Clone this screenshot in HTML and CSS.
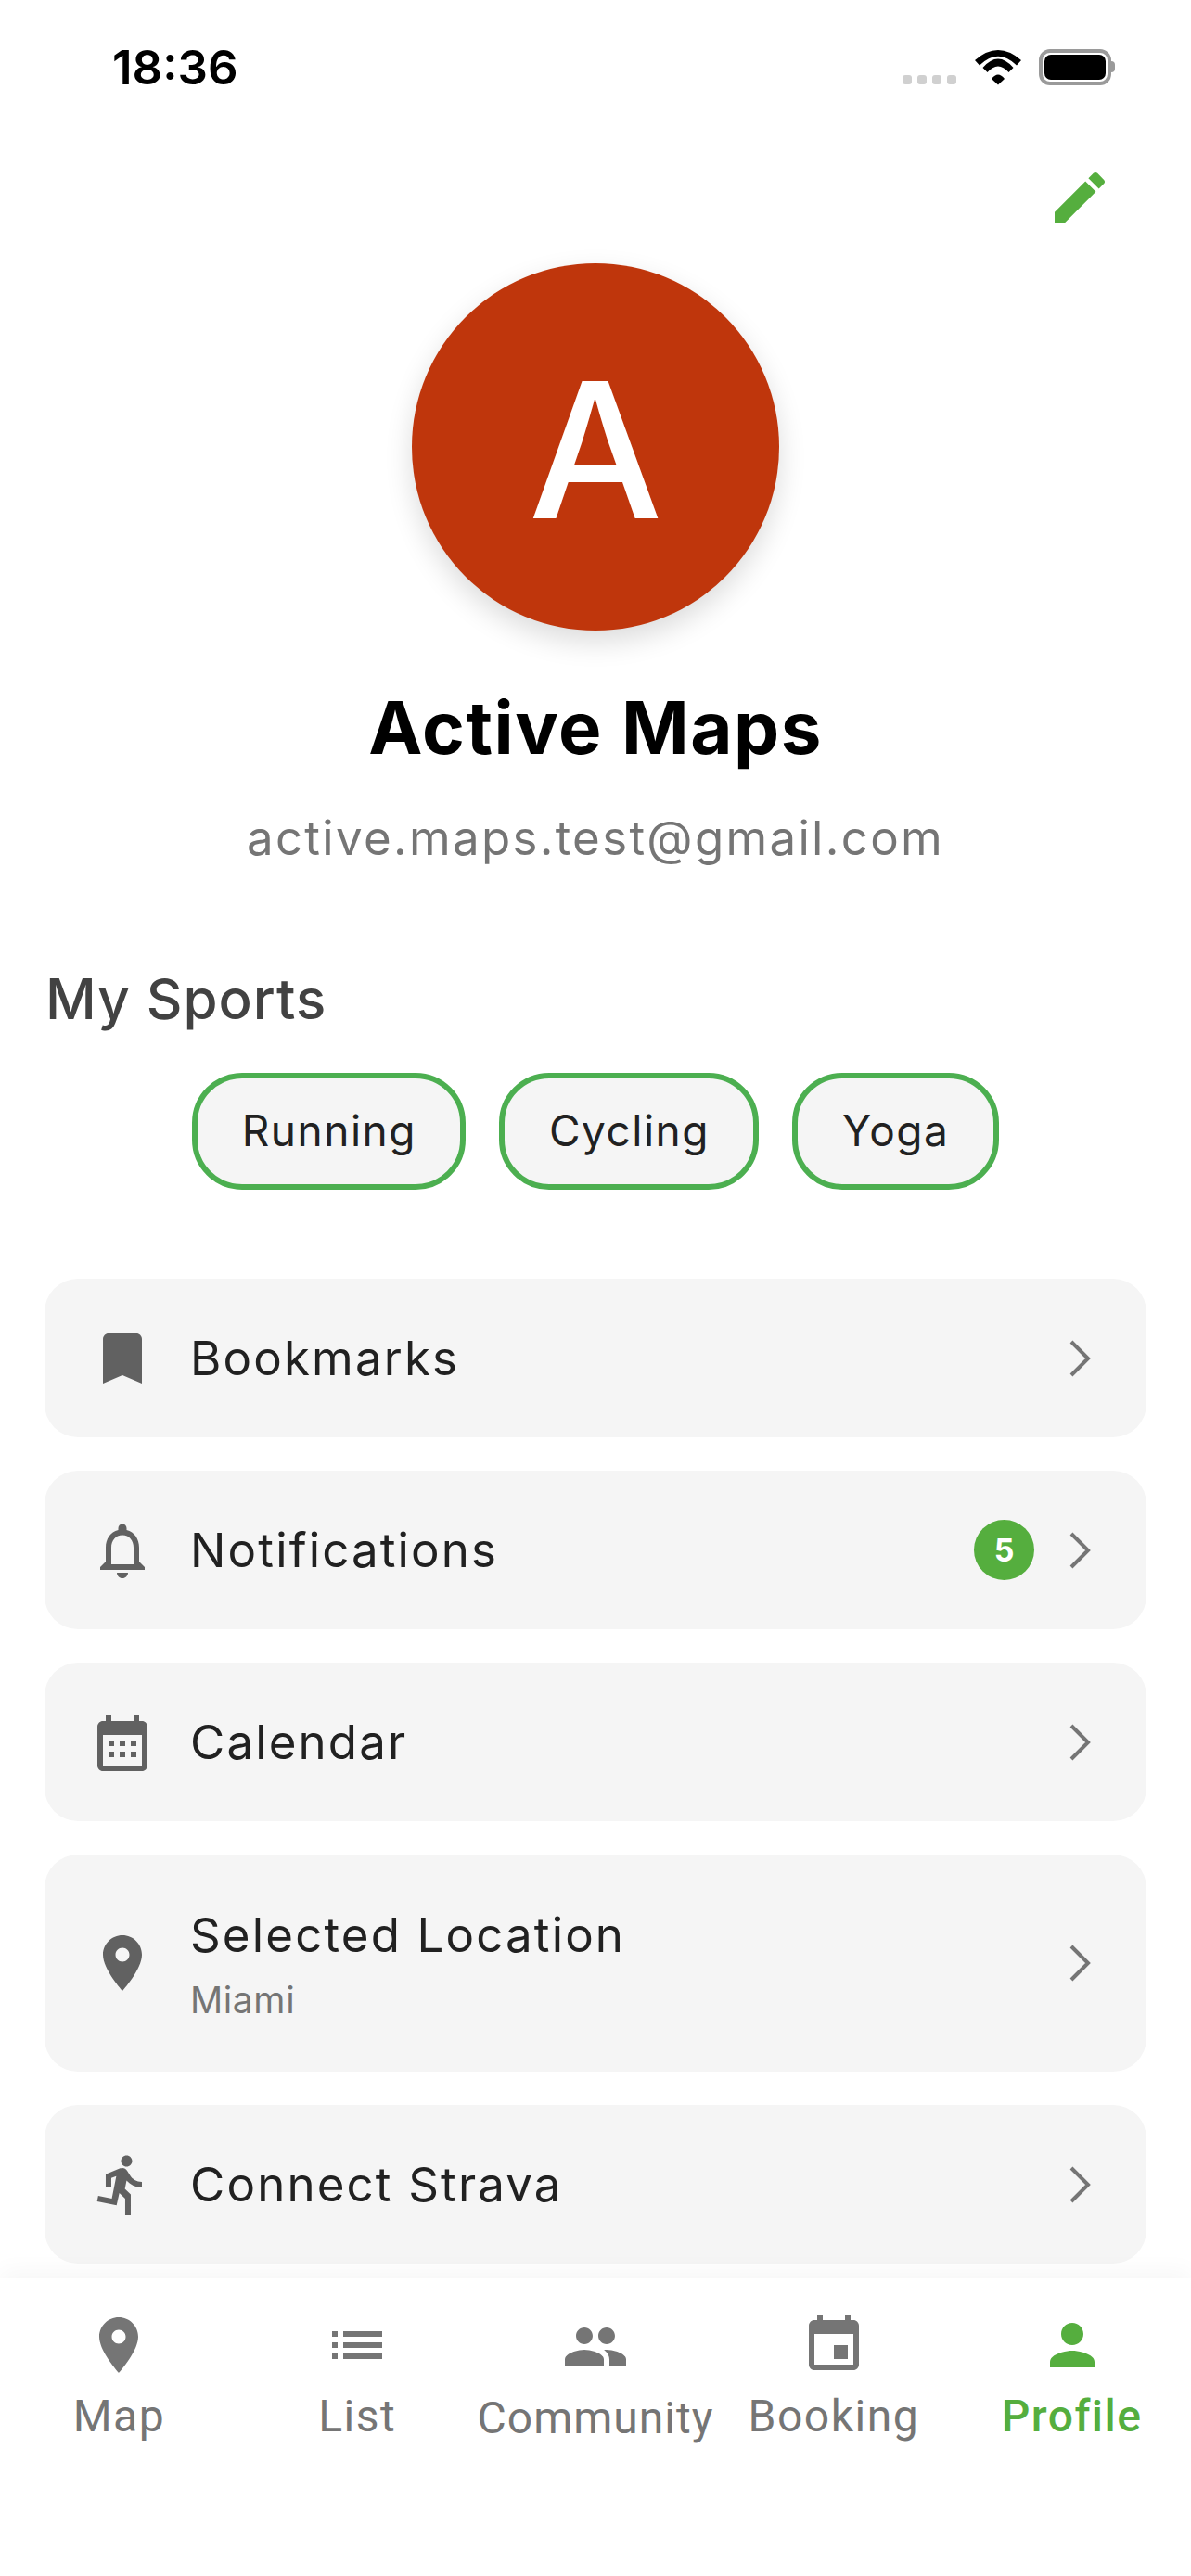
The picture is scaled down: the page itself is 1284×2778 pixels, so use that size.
FILE: index.html
```html
<!DOCTYPE html>
<html lang="en">
<head>
<meta charset="utf-8">
<title>Profile</title>
<link rel="stylesheet" href="styles.css">
</head>
<body>
<div class="screen">
  <header class="status-bar">
    <span class="time">18:36</span>
    <div class="status-icons">
      <div class="signal"><i></i><i></i><i></i><i></i></div>
      <svg class="wifi" viewBox="0 0 50 37.5"><path d="M0 11Q25-11 50 11L45 16.5Q25-3 5 16.5Z"/><path d="M8.5 19Q25 0 41.5 19L36.5 24Q25 11 13.5 24Z"/><path d="M18 31Q25 22 32 31L25 37.5Z"/></svg>
      <div class="battery"><div class="battery-fill"></div></div>
      <div class="battery-cap"></div>
    </div>
  </header>

  <main class="content">
    <div class="edit-row">
      <svg class="icon icon-green" viewBox="0 0 24 24"><path d="M3 17.25V21h3.75L17.81 9.94l-3.75-3.75L3 17.25zM20.71 7.04c.39-.39.39-1.02 0-1.41l-2.34-2.34c-.39-.39-1.02-.39-1.41 0l-1.83 1.83 3.75 3.75 1.83-1.83z"/></svg>
    </div>
    <div class="avatar">A</div>
    <h1 class="name">Active Maps</h1>
    <p class="email">active.maps.test@gmail.com</p>
    <h2 class="section-title">My Sports</h2>
    <div class="chips">
      <span class="chip">Running</span>
      <span class="chip">Cycling</span>
      <span class="chip">Yoga</span>
    </div>
    <div class="menu">
      <div class="card">
        <svg class="icon icon-dark" viewBox="0 0 24 24"><path d="M17 3H7c-1.1 0-1.99.9-1.99 2L5 21l7-3 7 3V5c0-1.1-.9-2-2-2z"/></svg>
        <div class="card-text"><span class="card-title">Bookmarks</span></div>
        <svg class="chevron" viewBox="0 0 24 40"><path d="M3 2L21 20L3 38"/></svg>
      </div>
      <div class="card">
        <svg class="icon icon-dark" viewBox="0 0 24 24"><path d="M12 22c1.1 0 2-.9 2-2h-4c0 1.1.89 2 2 2zm6-6v-5c0-3.07-1.64-5.64-4.5-6.32V4c0-.83-.67-1.5-1.5-1.5s-1.5.67-1.5 1.5v.68C7.63 5.36 6 7.92 6 11v5l-2 2v1h16v-1l-2-2zm-2 1H8v-6c0-2.48 1.51-4.5 4-4.5s4 2.02 4 4.5v6z"/></svg>
        <div class="card-text"><span class="card-title">Notifications</span></div>
        <span class="badge">5</span>
        <svg class="chevron" viewBox="0 0 24 40"><path d="M3 2L21 20L3 38"/></svg>
      </div>
      <div class="card">
        <svg class="icon icon-dark icon-low" viewBox="0 0 24 24"><path d="M19 3h-1V1h-2v2H8V1H6v2H5c-1.11 0-1.99.9-1.99 2L3 19c0 1.1.89 2 2 2h14c1.1 0 2-.9 2-2V5c0-1.1-.9-2-2-2zm0 16H5V8h14v11zM7 10h2v2H7zm4 0h2v2h-2zm4 0h2v2h-2zM7 14h2v2H7zm4 0h2v2h-2zm4 0h2v2h-2z"/></svg>
        <div class="card-text"><span class="card-title">Calendar</span></div>
        <svg class="chevron" viewBox="0 0 24 40"><path d="M3 2L21 20L3 38"/></svg>
      </div>
      <div class="card card-tall">
        <svg class="icon icon-dark" viewBox="0 0 24 24"><path d="M12 2C8.13 2 5 5.13 5 9c0 5.25 7 13 7 13s7-7.75 7-13c0-3.87-3.13-7-7-7zm0 9.5c-1.38 0-2.5-1.12-2.5-2.5s1.12-2.5 2.5-2.5 2.5 1.12 2.5 2.5-1.12 2.5-2.5 2.5z"/></svg>
        <div class="card-text"><span class="card-title">Selected Location</span><span class="card-sub">Miami</span></div>
        <svg class="chevron" viewBox="0 0 24 40"><path d="M3 2L21 20L3 38"/></svg>
      </div>
      <div class="card">
        <svg class="icon icon-dark" viewBox="0 0 24 24"><path d="M13.49 5.48c1.1 0 2-.9 2-2s-.9-2-2-2-2 .9-2 2 .9 2 2 2zm-3.6 13.9l1-4.4 2.1 2v6h2v-7.5l-2.1-2 .6-3c1.3 1.5 3.3 2.5 5.5 2.5v-2c-1.9 0-3.5-1-4.3-2.4l-1-1.6c-.4-.6-1-1-1.7-1-.3 0-.5.1-.8.1l-5.2 2.2v4.7h2v-3.4l1.8-.7-1.6 8.1-4.9-1-.4 2 7 1.4z"/></svg>
        <div class="card-text"><span class="card-title">Connect Strava</span></div>
        <svg class="chevron" viewBox="0 0 24 40"><path d="M3 2L21 20L3 38"/></svg>
      </div>
    </div>
  </main>

  <nav class="tabbar">
    <div class="tab">
      <svg class="icon" viewBox="0 0 24 24"><path d="M12 2C8.13 2 5 5.13 5 9c0 5.25 7 13 7 13s7-7.75 7-13c0-3.87-3.13-7-7-7zm0 9.5c-1.38 0-2.5-1.12-2.5-2.5s1.12-2.5 2.5-2.5 2.5 1.12 2.5 2.5-1.12 2.5-2.5 2.5z"/></svg>
      <span class="tab-label">Map</span>
    </div>
    <div class="tab">
      <svg class="icon" viewBox="0 0 24 24"><path d="M3 13h2v-2H3v2zm0 4h2v-2H3v2zm0-8h2V7H3v2zm4 4h14v-2H7v2zm0 4h14v-2H7v2zM7 7v2h14V7H7z"/></svg>
      <span class="tab-label">List</span>
    </div>
    <div class="tab tab-low">
      <svg class="icon" viewBox="0 0 24 24"><path d="M16 11c1.66 0 2.99-1.34 2.99-3S17.66 5 16 5c-1.66 0-3 1.34-3 3s1.34 3 3 3zm-8 0c1.66 0 2.99-1.34 2.99-3S9.66 5 8 5C6.34 5 5 6.34 5 8s1.34 3 3 3zm0 2c-2.33 0-7 1.17-7 3.5V19h14v-2.5c0-2.33-4.67-3.5-7-3.5zm8 0c-.29 0-.62.02-.97.05 1.16.84 1.97 1.97 1.97 3.45V19h6v-2.5c0-2.33-4.67-3.5-7-3.5z"/></svg>
      <span class="tab-label">Community</span>
    </div>
    <div class="tab">
      <svg class="icon" viewBox="0 0 24 24"><path d="M17 12h-5v5h5v-5zM16 1v2H8V1H6v2H5c-1.11 0-1.99.9-1.99 2L3 19c0 1.1.89 2 2 2h14c1.1 0 2-.9 2-2V5c0-1.1-.9-2-2-2h-1V1h-2zm3 18H5V8h14v11z"/></svg>
      <span class="tab-label">Booking</span>
    </div>
    <div class="tab tab-active">
      <svg class="icon" viewBox="0 0 24 24"><path d="M12 12c2.21 0 4-1.79 4-4s-1.79-4-4-4-4 1.79-4 4 1.79 4 4 4zm0 2c-2.67 0-8 1.34-8 4v2h16v-2c0-2.66-5.33-4-8-4z"/></svg>
      <span class="tab-label">Profile</span>
    </div>
  </nav>
</div>
</body>
</html>
```

FILE: styles.css
```css
* { box-sizing: border-box; }
html, body { margin: 0; padding: 0; background: #fff; }
body { font-family: Inter, "Liberation Sans", sans-serif; }

.screen {
  width: 1284px;
  height: 2778px;
  display: flex;
  flex-direction: column;
  overflow: hidden;
  background: #fff;
}

/* status bar */
.status-bar {
  height: 132px;
  flex: none;
  display: flex;
  justify-content: space-between;
  align-items: flex-start;
  padding: 44px 82px 0 121px;
}
.time {
  font-weight: 600;
  font-size: 51px;
  line-height: 58px;
  color: #000;
}
.status-icons {
  display: flex;
  align-items: flex-start;
  padding-top: 9px;
}
.signal {
  display: flex;
  gap: 6px;
  margin-top: 28px;
  margin-right: 20px;
}
.signal i {
  display: block;
  width: 10px;
  height: 10px;
  border-radius: 3px;
  background: #d0d0d0;
}
.wifi {
  width: 50px;
  height: 37.5px;
  fill: #000;
  margin-top: 1px;
  margin-right: 19px;
}
.battery {
  width: 78px;
  height: 39px;
  border: 4px solid #9a9a9a;
  border-radius: 12px;
  padding: 2px;
  background: #fff;
}
.battery-fill {
  width: 100%;
  height: 100%;
  background: #000;
  border-radius: 7px;
}
.battery-cap {
  width: 4px;
  height: 12px;
  margin-top: 13px;
  background: #9a9a9a;
  border-radius: 0 6px 6px 0;
}

/* content */
.content {
  flex: 1;
  min-height: 0;
  overflow: hidden;
  display: flex;
  flex-direction: column;
  align-items: center;
}
.edit-row {
  align-self: stretch;
  display: flex;
  justify-content: flex-end;
  padding: 45px 84px 0 0;
}
.icon {
  width: 72px;
  height: 72px;
  flex: none;
  display: block;
  fill: #757575;
}
.icon-green { fill: #55ae3e; }
.icon-dark { fill: #616161; }
.icon-low { margin-top: 8px; }

.avatar {
  width: 396px;
  height: 396px;
  margin-top: 35px;
  flex: none;
  border-radius: 50%;
  background: #bf360c;
  color: #fff;
  display: flex;
  align-items: center;
  justify-content: center;
  font-size: 204px;
  font-weight: 450;
  line-height: 1;
  padding-top: 6px;
  box-shadow: 0 12px 30px rgba(0, 0, 0, 0.14);
}
.name {
  margin: 60px 0 0;
  font-size: 78px;
  line-height: 90px;
  font-weight: 700;
  letter-spacing: 1.5px;
  color: #000;
}
.email {
  margin: 44px 0 0;
  font-size: 51px;
  line-height: 60px;
  letter-spacing: 2.3px;
  color: #757575;
}
.section-title {
  align-self: flex-start;
  margin: 108px 0 0 49px;
  font-size: 60px;
  line-height: 70px;
  font-weight: 500;
  letter-spacing: 1px;
  color: #424242;
}
.chips {
  display: flex;
  justify-content: center;
  gap: 36px;
  margin-top: 45px;
  margin-left: 0;
}
.chip {
  height: 126px;
  display: flex;
  align-items: center;
  padding: 0 47.5px 2px;
  border: 6px solid #4caf50;
  border-radius: 54px;
  background: #f5f5f5;
  font-size: 46px;
  letter-spacing: 1.5px;
  color: #212121;
}

.menu {
  align-self: stretch;
  display: flex;
  flex-direction: column;
  gap: 36px;
  margin: 96px 48px 0;
}
.card {
  height: 171px;
  flex: none;
  display: flex;
  align-items: center;
  padding: 0 60px 0 48px;
  border-radius: 36px;
  background: #f5f5f5;
}
.card-tall { height: 234px; }
.card-text {
  flex: 1;
  display: flex;
  flex-direction: column;
  margin-left: 37px;
  min-width: 0;
}
.card-title {
  font-size: 51px;
  line-height: 60px;
  letter-spacing: 2.15px;
  color: #212121;
}
.card-sub {
  margin-top: 20px;
  font-size: 39px;
  line-height: 40px;
  letter-spacing: 0.6px;
  color: #757575;
}
.badge {
  width: 65px;
  height: 65px;
  flex: none;
  margin-right: 37px;
  border-radius: 50%;
  background: #55ae3e;
  color: #fff;
  display: flex;
  align-items: center;
  justify-content: center;
  font-size: 34px;
  font-weight: 700;
}
.chevron {
  width: 24px;
  height: 40px;
  flex: none;
  fill: none;
  stroke: #757575;
  stroke-width: 4;
}

/* tab bar */
.tabbar {
  position: relative;
  flex: none;
  height: 321px;
  display: grid;
  grid-template-columns: repeat(5, 1fr);
  padding-top: 36px;
  background: #fff;
  box-shadow: 0 -8px 24px rgba(0, 0, 0, 0.035);
  font-family: Roboto, "Liberation Sans", sans-serif;
}
.tab {
  display: flex;
  flex-direction: column;
  align-items: center;
  white-space: nowrap;
  color: #757575;
}
.tab-low { padding-top: 2px; }
.tab-low .tab-label { letter-spacing: 1px; }
.tab-active { color: #55ae3e; }
.tab-active .icon { fill: #55ae3e; }
.tab-active .tab-label { font-weight: 500; }
.tab-label {
  margin-top: 13px;
  font-size: 48px;
  line-height: 56px;
  letter-spacing: 1.5px;
}
```
